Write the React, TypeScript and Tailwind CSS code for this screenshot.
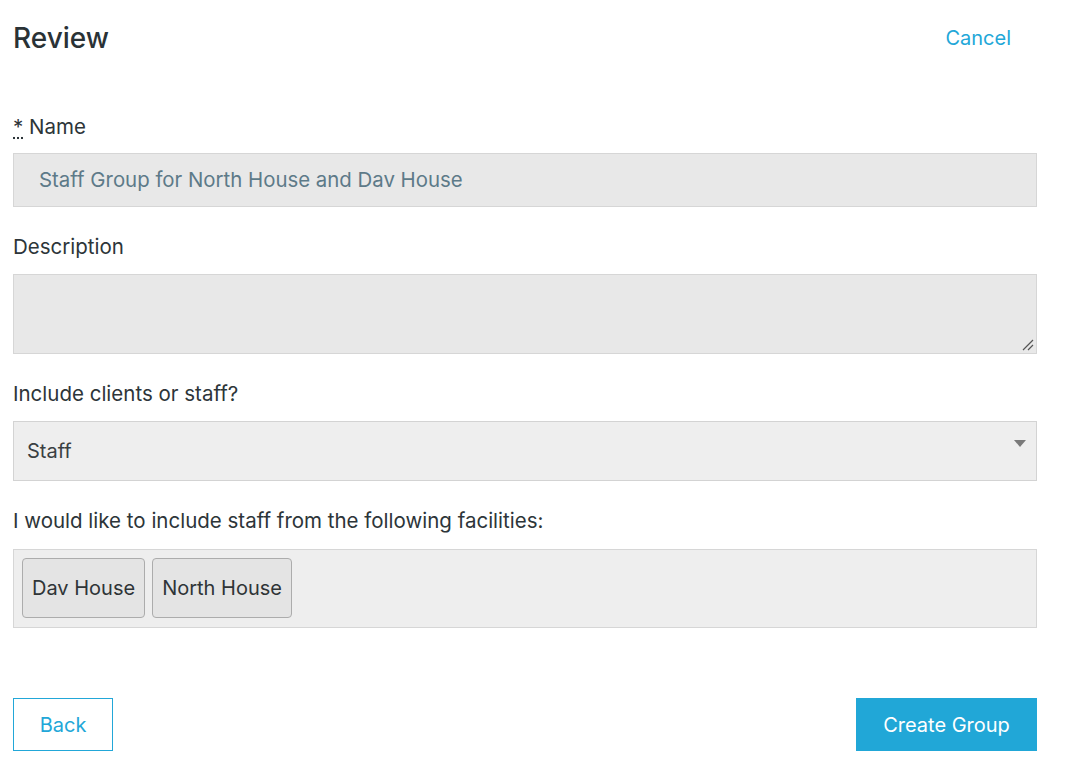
export default function App() {
  return (
    <div
      className="w-[1066px] h-[782px] bg-white text-[#2d3539]"
      style={{ fontFamily: "Inter, 'Noto Sans', sans-serif" }}
    >
      <div className="w-[1024px] ml-[13px]">
        {/* Header */}
        <div className="flex items-center justify-between h-[76px]">
          <h1 className="text-[28px] font-medium text-[#2a3236]">Review</h1>
          <button className="text-[20px] text-[#22a7d8] mr-[26px]">Cancel</button>
        </div>

        {/* Name */}
        <div className="mt-[39px]">
          <label className="block text-[20.5px] h-[24px] leading-[24px]">
            <span className="underline decoration-dotted underline-offset-[3px]">*</span> Name
          </label>
          <div className="mt-[14px] h-[54px] bg-[#e8e8e8] border border-[#d6d6d6] flex items-center pl-[25px] text-[20.4px] text-[#5d7a88]">
            Staff Group for North House and Dav House
          </div>
        </div>

        {/* Description */}
        <div className="mt-[28px]">
          <label className="block text-[20.5px] h-[24px] leading-[24px]">Description</label>
          <div className="relative mt-[15px] h-[80px] bg-[#e8e8e8] border border-[#d6d6d6]">
            <svg className="absolute right-[2px] bottom-[2px]" width="14" height="14" viewBox="0 0 14 14">
              <path d="M3 13 L13 3 M8 13 L13 8" stroke="#555" strokeWidth="1.2" />
            </svg>
          </div>
        </div>

        {/* Include clients or staff */}
        <div className="mt-[28px]">
          <label className="block text-[20.5px] h-[24px] leading-[24px]">Include clients or staff?</label>
          <div className="relative mt-[15px] h-[60px] bg-[#eeeeee] border border-[#d3d3d3] flex items-center pl-[13px] text-[20px] text-[#3a3f42]">
            Staff
            <svg className="absolute right-[10px] top-[18px]" width="12" height="8" viewBox="0 0 12 8">
              <path d="M0 0 L12 0 L6 7 Z" fill="#7a7a7a" />
            </svg>
          </div>
        </div>

        {/* Facilities */}
        <div className="mt-[28px]">
          <label className="block text-[20.5px] h-[24px] leading-[24px]">
            I would like to include staff from the following facilities:
          </label>
          <div className="mt-[16px] h-[79px] bg-[#eeeeee] border border-[#d6d6d6] flex items-start gap-[7px] pt-[8px] pl-[8px]">
            <span className="h-[60px] px-[9px] flex items-center bg-[#e4e4e4] border border-[#acacac] rounded-[4px] text-[20px] text-[#2f3437]">
              Dav House
            </span>
            <span className="h-[60px] px-[9px] flex items-center bg-[#e4e4e4] border border-[#acacac] rounded-[4px] text-[20px] text-[#2f3437]">
              North House
            </span>
          </div>
        </div>

        {/* Footer buttons */}
        <div className="mt-[70px] flex items-center justify-between">
          <button className="w-[100px] h-[53px] border border-[#22a7d8] text-[20px] text-[#22a7d8] bg-white">
            Back
          </button>
          <button className="w-[181px] h-[53px] bg-[#21a7d7] text-[20px] text-white">
            Create Group
          </button>
        </div>
      </div>
    </div>
  );
}
